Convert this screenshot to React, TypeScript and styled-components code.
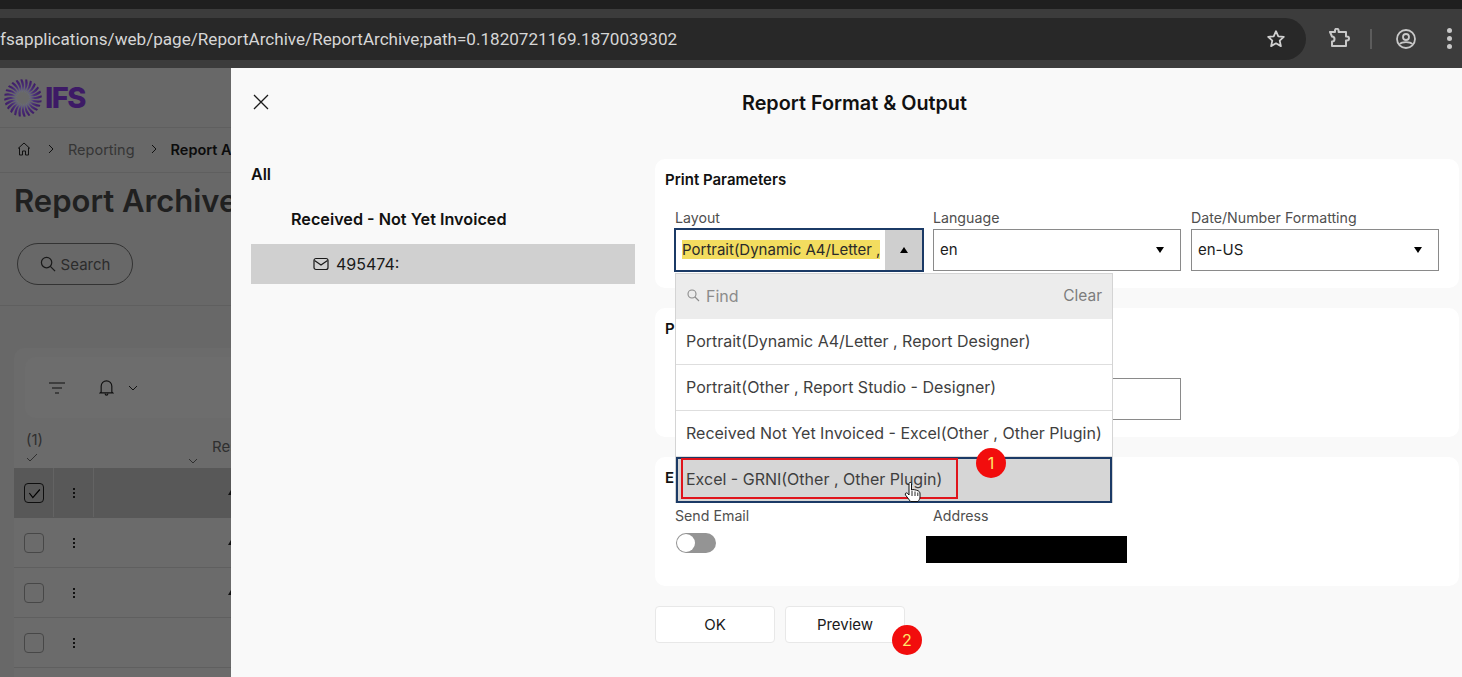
import React from "react";
import styled, { createGlobalStyle } from "styled-components";

const Global = createGlobalStyle`
  html, body { margin: 0; padding: 0; background: #f9f9f9; }
  * { box-sizing: border-box; }
  body { font-family: Inter, "Liberation Sans", sans-serif; }
`;

const Shell = styled.div`
  width: 1462px; height: 677px; overflow: hidden; display: flex; flex-direction: column; position: relative;
`;
const TabStrip = styled.div`height: 9px; background: #1f1f1f; flex: none;`;
const Toolbar = styled.div`
  height: 59px; flex: none; background: #3c3c3c; display: flex; align-items: center;
`;
const UrlPill = styled.div`
  width: 1306px; height: 42px; background: #282828; border-radius: 0 21px 21px 0; display: flex; align-items: center;
  justify-content: space-between; padding-right: 20px; flex: none;
`;
const UrlText = styled.span`
  font-family: Roboto, sans-serif; font-size: 17.1px; color: #d6d6d6; white-space: nowrap;
`;
const ChromeIcons = styled.div`
  flex: 1; display: flex; align-items: center; padding-left: 22px; color: #c8c8c8;
  svg { flex: none; }
`;
const ChromeDivider = styled.div`width: 2px; height: 20px; background: #5c5c5c; margin: 0 23px 0 20px; flex: none;`;
const MenuDots = styled.div`
  margin-left: 30px; display: flex; flex-direction: column; gap: 3px;
  span { width: 5px; height: 5px; border-radius: 50%; background: #c8c8c8; display: block; }
`;
const Main = styled.div`flex: 1; display: flex; min-height: 0;`;

/* Dimmed page behind the dialog */
const BackPage = styled.div`
  width: 231px; flex: none; background: #686868; overflow: hidden; display: flex; flex-direction: column;
`;
const LogoBar = styled.div`
  height: 60px; flex: none; border-bottom: 1px solid #5f5f5f; display: flex; align-items: center; padding-left: 4px; gap: 3px;
`;
const LogoWord = styled.span`
  font-weight: 800; font-size: 29px; color: #3d1a66; letter-spacing: -1.5px; line-height: 1;
`;
const Crumbs = styled.div`
  height: 45px; flex: none; border-bottom: 1px solid #5f5f5f; display: flex; align-items: center; padding: 0 0 2px 16px;
  font-size: 14.5px; color: #353535; white-space: nowrap;
  svg { flex: none; }
`;
const CrumbSep = styled.span`display: flex; flex: none; margin: 0 11px 0 13px; color: #111;`;
const CrumbNow = styled.b`color: #0c0c0c; font-weight: 600;`;
const PageTitle = styled.h1`
  margin: 0; padding: 9px 0 0 14px; font-size: 31px; line-height: 38px; font-weight: 600; color: #202020; white-space: nowrap;
`;
const SearchRow = styled.div`
  height: 86px; flex: none; border-bottom: 1px solid #5f5f5f; padding: 23px 0 0 17px;
`;
const SearchBtn = styled.div`
  width: 116px; height: 42px; border: 1px solid #333; border-radius: 21px; display: flex; align-items: center; justify-content: center;
  gap: 5px; color: #2c2c2c; font-size: 15px;
`;
const GridCard = styled.div`
  margin: 42px 0 0 14px; flex: 1; display: flex; flex-direction: column; background: #6b6b6b; border-radius: 10px 0 0 0;
`;
const FilterBar = styled.div`
  height: 61px; flex: none; margin: 9px 0 0 11px; border-radius: 10px 0 0 10px; background: #6d6d6d; display: flex; align-items: center;
  padding: 0 0 0 24px; color: #111;
  svg { flex: none; }
`;
const BellWrap = styled.div`display: flex; align-items: center; margin-left: 34px; gap: 13px;`;
const HeadRow = styled.div`
  height: 50px; flex: none; display: flex; font-size: 15px; color: #2f2f2f;
`;
const HeadCount = styled.div`
  width: 39px; flex: none; padding: 14px 0 0 12px; line-height: 16px; display: flex; flex-direction: column; gap: 3px; font-size: 15px;
  svg { flex: none; }
`;
const HeadCol = styled.div`
  flex: 1; display: flex; padding: 20px 0 0 134px; gap: 13px; white-space: nowrap; overflow: hidden; line-height: 18px;
  svg { margin-top: 17px; flex: none; }
`;
const Row = styled.div<{ $on?: boolean }>`
  height: 50px; flex: none; display: flex; align-items: center; background: ${p => (p.$on ? "#585858" : "transparent")};
  border-bottom: 1px solid ${p => (p.$on ? "#585858" : "#5f5f5f")};
`;
const CheckCell = styled.div<{ $on?: boolean }>`
  width: 40px; height: 100%; flex: none; display: flex; align-items: center; justify-content: center;
  border-right: 1px solid ${p => (p.$on ? "#636363" : "transparent")};
`;
const CheckBox = styled.div<{ $on?: boolean }>`
  width: 20px; height: 20px; border-radius: 4px; border: 1px solid ${p => (p.$on ? "#0e0e0e" : "#474747")};
  display: flex; align-items: center; justify-content: center;
`;
const MenuCell = styled.div<{ $on?: boolean }>`
  width: 40px; height: 100%; flex: none; display: flex; flex-direction: column; align-items: center; justify-content: center; gap: 2px;
  border-right: 1px solid ${p => (p.$on ? "#636363" : "transparent")};
  i { width: 2px; height: 2px; background: #111; display: block; }
`;
const RowEnd = styled.div`
  flex: 1; height: 100%; display: flex; align-items: center; justify-content: flex-end;
  i { width: 0; height: 0; border-left: 3px solid transparent; border-bottom: 5px solid #111; display: block; }
`;

/* Dialog */
const Dialog = styled.div`
  flex: 1; background: #f9f9f9; display: flex; flex-direction: column; min-width: 0;
`;
const DialogHead = styled.div`
  height: 71px; flex: none; display: flex; align-items: center; padding: 0 0 0 20px;
`;
const CloseBtn = styled.div`display: flex; color: #1a1a1a; margin-bottom: 3px;`;
const DialogTitle = styled.div`
  font-size: 19.8px; font-weight: 600; color: #111; margin: 0 0 1px 471px; white-space: nowrap;
`;
const DialogBody = styled.div`flex: 1; display: flex; padding: 20px 3px 0 20px; gap: 20px; min-height: 0;`;
const Tree = styled.div`width: 384px; flex: none; display: flex; flex-direction: column;`;
const TreeAll = styled.div`font-size: 16px; font-weight: 600; color: #111; height: 30px; line-height: 30px;`;
const TreeGroup = styled.div`
  font-size: 16.2px; font-weight: 600; color: #111; height: 40px; line-height: 40px; padding-left: 40px; margin-top: 10px; margin-bottom: 5px;
`;
const TreeLeaf = styled.div`
  height: 40px; background: #d0d0d0; display: flex; align-items: center; padding-left: 62px; gap: 7px; font-size: 16px; color: #1a1a1a;
`;
const Forms = styled.div`flex: 1; display: flex; flex-direction: column; gap: 20px; min-width: 0; position: relative;`;
const Panel = styled.section`
  height: 129px; background: #fff; border-radius: 10px; padding: 12px 20px 0 10px; flex: none;
`;
const PanelTitle = styled.h3`
  margin: 0; font-size: 15px; line-height: 18px; font-weight: 600; color: #111;
`;
const FieldRow = styled.div<{ $top?: number }>`
  display: grid; grid-template-columns: repeat(3, 248px); column-gap: 10px; padding-left: 10px; margin-top: ${p => p.$top ?? 19}px;
`;
const FieldLabel = styled.label`
  display: block; font-size: 14.2px; line-height: 20px; height: 21px; color: #4f4f4f; white-space: nowrap;
`;
const SelectBox = styled.div<{ $focus?: boolean }>`
  height: ${p => (p.$focus ? 44 : 42)}px; display: flex; align-items: center; background: #fff;
  margin: ${p => (p.$focus ? "-1px -1px 0" : "0")};
  border: ${p => (p.$focus ? "2px solid #1b3a66" : "1px solid #8a8a8a")};
  font-size: 15px; color: #1c1c1c; overflow: hidden;
`;
const SelectValue = styled.span`flex: 1; padding: 0 0 2px 6px; white-space: nowrap; overflow: hidden;`;
const Highlighted = styled.span`background: #f3dd5f; line-height: 19px; display: inline-block; color: #2a2a2a;`;
const SelectArrow = styled.span<{ $open?: boolean }>`
  width: 37px; align-self: stretch; flex: none; display: flex; align-items: center; justify-content: center;
  background: ${p => (p.$open ? "#cfcfcf" : "transparent")};
  margin-right: ${p => (p.$open ? 0 : 2)}px;
  &::after {
    content: ""; width: 0; height: 0; border-left: 4.5px solid transparent; border-right: 4.5px solid transparent;
    ${p => (p.$open ? "border-bottom: 6px solid #000;" : "border-top: 6px solid #000;")}
  }
`;
const PlainInput = styled.div`height: 42px; background: #fff; border: 1px solid #8a8a8a; grid-column: 2;`;
const SwitchTrack = styled.div`
  width: 40px; height: 20px; border-radius: 10px; background: #949494; padding: 1px; margin-left: 1px; margin-top: 6px;
  &::before { content: ""; display: block; width: 18px; height: 18px; border-radius: 50%; background: #fff; }
`;
const Redacted = styled.div`width: 201px; height: 27px; background: #000; margin: 9px 0 0 -7px;`;
const Buttons = styled.div`display: flex; gap: 10px;`;
const Button = styled.div`
  width: 120px; height: 37px; background: #fff; border: 1px solid #e8e8e8; border-radius: 4px;
  display: flex; align-items: center; justify-content: center; font-size: 15px; color: #1a1a1a;
`;

/* Open dropdown over the panels */
const Dropdown = styled.div`
  position: absolute; left: 20px; top: 114px; width: 438px; height: 230px; background: #fff; border: 1px solid #d4d4d4; border-bottom: 0;
  display: flex; flex-direction: column; color: #3f3f3f; font-size: 16px; z-index: 3;
`;
const FindRow = styled.div`
  height: 45px; flex: none; background: #ececec; display: flex; align-items: center; padding: 0 10px 2px 11px; color: #8b8b8b;
  svg { flex: none; }
`;
const FindLabel = styled.span`flex: 1; margin-left: 6px;`;
const ClearLabel = styled.span`font-size: 15.5px; color: #7d7d7d;`;
const Option = styled.div<{ $on?: boolean }>`
  height: 46px; flex: none; display: flex; align-items: center; white-space: nowrap; padding: 0 0 2px ${p => (p.$on ? 8 : 10)}px;
  ${p => (p.$on ? "background: #d6d6d6; border: 2px solid #1b3a66;" : "border-bottom: 1px solid #dedede;")}
`;
const RedFrame = styled.div`
  position: absolute; left: 26px; top: 299px; width: 277px; height: 41px; border: 2px solid #e0141c; z-index: 4; pointer-events: none;
`;
const Badge = styled.div<{ $x: number; $y: number }>`
  position: absolute; left: ${p => p.$x}px; top: ${p => p.$y}px; width: 30px; height: 30px; border-radius: 50%; background: #f20d0d;
  color: #ffe96a; font-size: 16px; display: flex; align-items: center; justify-content: center; z-index: 5;
`;
const Cursor = styled.svg`position: absolute; left: 904px; top: 481px; z-index: 6;`;

const Caret = ({ d = "M2 4l4 4 4-4", s = 12 }: { d?: string; s?: number }) => (
  <svg width={s} height={s} viewBox="0 0 12 12" fill="none" stroke="currentColor" strokeWidth="1">
    <path d={d} />
  </svg>
);

const Logo = () => {
  const rays = Array.from({ length: 24 }, (_, i) => (i * 360) / 24);
  return (
    <svg width="38" height="38" viewBox="-19 -19 38 38">
      <defs>
        <radialGradient id="ifsRay" gradientUnits="userSpaceOnUse" cx="0" cy="0" r="19">
          <stop offset="0.25" stopColor="#6f7f92" />
          <stop offset="0.6" stopColor="#4a2f78" />
          <stop offset="1" stopColor="#3d1a66" />
        </radialGradient>
      </defs>
      {rays.map(a => (
        <path key={a} d="M1 -5.500 Q 6 -12 4.200 -18.400 L2.200 -18.600 Q 3 -12 1 -5.500Z" fill="url(#ifsRay)" transform={`rotate(${a})`} />
      ))}
    </svg>
  );
};

export default function App() {
  return (
    <Shell>
      <Global />
      <TabStrip />
      <Toolbar>
        <UrlPill>
          <UrlText>fsapplications/web/page/ReportArchive/ReportArchive;path=0.1820721169.1870039302</UrlText>
          <svg width="20" height="20" viewBox="0 0 20 20" fill="none" stroke="#d0d0d0" strokeWidth="1.800" strokeLinejoin="round">
            <path d="M10 2.200l2.300 5.100 5.500.6-4.100 3.700 1.200 5.500L10 14.300l-4.900 2.800 1.200-5.500L2.200 7.900l5.500-.6z" />
          </svg>
        </UrlPill>
        <ChromeIcons>
          <svg width="22" height="22" viewBox="0 0 22 22" fill="none" stroke="#c8c8c8" strokeWidth="2" strokeLinejoin="round">
            <path d="M2 5h5V3.500a1.800 1.800 0 0 1 3.600 0V5h7.400v4.500h1a2 2 0 0 1 0 4h-1V19H4v-4.500a2 2 0 0 0 0-5z" transform="translate(0 -1)" />
          </svg>
          <ChromeDivider />
          <svg width="22" height="22" viewBox="0 0 22 22" fill="none" stroke="#c8c8c8" strokeWidth="1.800">
            <circle cx="11" cy="11" r="9" />
            <circle cx="11" cy="9" r="3" />
            <path d="M4.800 16c2-2.600 10.400-2.600 12.400 0" />
          </svg>
          <MenuDots><span /><span /><span /></MenuDots>
        </ChromeIcons>
      </Toolbar>
      <Main>
        <BackPage>
          <LogoBar>
            <Logo />
            <LogoWord>IFS</LogoWord>
          </LogoBar>
          <Crumbs>
            <svg width="16" height="16" viewBox="0 0 16 16" fill="none" stroke="#111" strokeWidth="1">
              <path d="M2 7.500 8 2l6 5.500M3.500 6.500V14h3v-4h3v4h3V6.500" />
            </svg>
            <CrumbSep><Caret d="M4 2l4 4-4 4" /></CrumbSep>
            Reporting
            <CrumbSep><Caret d="M4 2l4 4-4 4" /></CrumbSep>
            <CrumbNow>Report Archive</CrumbNow>
          </Crumbs>
          <PageTitle>Report Archive</PageTitle>
          <SearchRow>
            <SearchBtn>
              <svg width="16" height="16" viewBox="0 0 17 17" fill="none" stroke="#1a1a1a" strokeWidth="1.300">
                <circle cx="7" cy="7" r="5.500" />
                <path d="M11 11l5 5" />
              </svg>
              Search
            </SearchBtn>
          </SearchRow>
          <GridCard>
            <FilterBar>
              <svg width="16" height="12" viewBox="0 0 16 12" fill="none" stroke="#111" strokeWidth="1.200">
                <path d="M0 1h16M3 6h10M6 11h4" />
              </svg>
              <BellWrap>
                <svg width="15" height="16" viewBox="0 0 16 18" fill="none" stroke="#111" strokeWidth="1.300">
                  <path d="M2 13.500V7a6 6 0 0 1 12 0v6.500l1 1H1zM6.500 15.500a1.500 1.500 0 0 0 3 0" />
                </svg>
                <Caret />
              </BellWrap>
            </FilterBar>
            <HeadRow>
              <HeadCount>
                (1)
                <Caret d="M1 7l3 3 7-7" />
              </HeadCount>
              <HeadCol>
                <Caret />
                <span>Res</span>
              </HeadCol>
            </HeadRow>
            <Row $on>
              <CheckCell $on>
                <CheckBox $on><Caret d="M2 6l3 4 6-7" s={14} /></CheckBox>
              </CheckCell>
              <MenuCell $on><i /><i /><i /></MenuCell>
              <RowEnd><i /></RowEnd>
            </Row>
            {[0, 1, 2].map(n => (
              <Row key={n}>
                <CheckCell><CheckBox /></CheckCell>
                <MenuCell><i /><i /><i /></MenuCell>
                <RowEnd>{n < 2 ? <i /> : null}</RowEnd>
              </Row>
            ))}
          </GridCard>
        </BackPage>
        <Dialog>
          <DialogHead>
            <CloseBtn>
              <svg width="20" height="20" viewBox="0 0 20 20" fill="none" stroke="currentColor" strokeWidth="1.300">
                <path d="M3 3l14 14M17 3L3 17" />
              </svg>
            </CloseBtn>
            <DialogTitle>Report Format &amp; Output</DialogTitle>
          </DialogHead>
          <DialogBody>
            <Tree>
              <TreeAll>All</TreeAll>
              <TreeGroup>Received - Not Yet Invoiced</TreeGroup>
              <TreeLeaf>
                <svg width="16" height="14" viewBox="0 0 16 14" fill="none" stroke="#1a1a1a" strokeWidth="1.200">
                  <rect x="1" y="1.500" width="14" height="11" rx="2" />
                  <path d="M1.500 3.500 8 8l6.500-4.500" />
                </svg>
                495474:
              </TreeLeaf>
            </Tree>
            <Forms>
              <Panel>
                <PanelTitle>Print Parameters</PanelTitle>
                <FieldRow>
                  <div>
                    <FieldLabel>Layout</FieldLabel>
                    <SelectBox $focus>
                      <SelectValue><Highlighted>Portrait(Dynamic A4/Letter ,</Highlighted></SelectValue>
                      <SelectArrow $open />
                    </SelectBox>
                  </div>
                  <div>
                    <FieldLabel>Language</FieldLabel>
                    <SelectBox><SelectValue>en</SelectValue><SelectArrow /></SelectBox>
                  </div>
                  <div>
                    <FieldLabel>Date/Number Formatting</FieldLabel>
                    <SelectBox><SelectValue>en-US</SelectValue><SelectArrow /></SelectBox>
                  </div>
                </FieldRow>
              </Panel>
              <Panel>
                <PanelTitle>P</PanelTitle>
                <FieldRow $top={40}>
                  <PlainInput />
                </FieldRow>
              </Panel>
              <Panel>
                <PanelTitle>E</PanelTitle>
                <FieldRow>
                  <div>
                    <FieldLabel>Send Email</FieldLabel>
                    <SwitchTrack />
                  </div>
                  <div>
                    <FieldLabel>Address</FieldLabel>
                    <Redacted />
                  </div>
                </FieldRow>
              </Panel>
              <Buttons>
                <Button>OK</Button>
                <Button>Preview</Button>
              </Buttons>
              <Dropdown>
                <FindRow>
                  <svg width="13" height="13" viewBox="0 0 13 13" fill="none" stroke="#8b8b8b" strokeWidth="1.100">
                    <circle cx="5" cy="5" r="4" />
                    <path d="M8 8l4 4" />
                  </svg>
                  <FindLabel>Find</FindLabel>
                  <ClearLabel>Clear</ClearLabel>
                </FindRow>
                <Option>Portrait(Dynamic A4/Letter , Report Designer)</Option>
                <Option>Portrait(Other , Report Studio - Designer)</Option>
                <Option>Received Not Yet Invoiced - Excel(Other , Other Plugin)</Option>
                <Option $on>Excel - GRNI(Other , Other Plugin)</Option>
              </Dropdown>
              <RedFrame />
            </Forms>
          </DialogBody>
        </Dialog>
      </Main>
      <Badge $x={976} $y={448}>1</Badge>
      <Badge $x={892} $y={625}>2</Badge>
      <Cursor width="18" height="24" viewBox="0 0 18 24">
        <path d="M5 2.500c0-1.500 2.500-1.500 2.500 0V9l1.500-.5 1.800.3 1.700.4 2 .8c1 .6 1.500 1.500 1.500 3v3c0 2-1 3-2 4.500H6.500L1.500 14c-1-1.500.8-2.800 2-1.700L5 14z" fill="#fff" stroke="#111" strokeWidth="1" />
        <path d="M8 10v5M11 10.500V15M13.800 11.500V15" stroke="#111" strokeWidth="0.900" />
      </Cursor>
    </Shell>
  );
}
